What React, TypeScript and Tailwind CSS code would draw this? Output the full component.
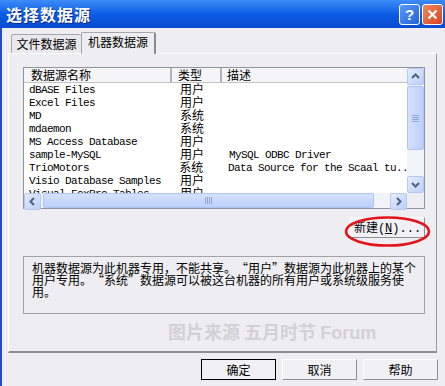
import type { ReactNode } from 'react';

const cjk = '[font-family:"Noto_Sans_CJK_SC",sans-serif]';
const mono = '[font-family:"Liberation_Mono","Noto_Sans_CJK_SC",monospace]';

type Row = { name: string; type: string; desc?: string };

const rows: Row[] = [
    { name: 'dBASE Files', type: '用户' },
    { name: 'Excel Files', type: '用户' },
    { name: 'MD', type: '系统' },
    { name: 'mdaemon', type: '系统' },
    { name: 'MS Access Database', type: '用户' },
    { name: 'sample-MySQL', type: '用户', desc: 'MySQL ODBC Driver' },
    { name: 'TrioMotors', type: '系统', desc: 'Data Source for the Scaal tu..' },
    { name: 'Visio Database Samples', type: '用户' },
    { name: 'Visual FoxPro Tables', type: '用户' },
];

function Arrow({ dir }: { dir: 'up' | 'down' | 'left' | 'right' }) {
    const d = {
        up: 'M2 7 L5.5 3.5 L9 7',
        down: 'M2 4 L5.5 7.5 L9 4',
        left: 'M7 2 L3.5 5.5 L7 9',
        right: 'M4 2 L7.5 5.5 L4 9',
    }[dir];
    return (
        <svg width="11" height="11" viewBox="0 0 11 11">
            <path d={d} fill="none" stroke="#4d6185" strokeWidth="2" />
        </svg>
    );
}

function ScrollBtn({ dir }: { dir: 'up' | 'down' | 'left' | 'right' }) {
    return (
        <div className="flex h-[17px] w-[17px] shrink-0 items-center justify-center rounded-[2px] border border-[#b4c8f6] bg-gradient-to-br from-[#e4ecfd] to-[#bdd0f8]">
            <Arrow dir={dir} />
        </div>
    );
}

function Grip({ vertical }: { vertical?: boolean }) {
    return (
        <div className={vertical ? 'flex flex-col gap-[1px]' : 'flex gap-[1px]'}>
            {[0, 1, 2, 3].map((i) => (
                <div
                    key={i}
                    className={
                        vertical
                            ? 'h-[1px] w-[7px] bg-[#8da6dc]'
                            : 'h-[7px] w-[1px] bg-[#8da6dc]'
                    }
                />
            ))}
        </div>
    );
}

// full-width curly quotes, as the system font draws them
function Q({ open, children }: { open?: boolean; children: ReactNode }) {
    return (
        <span className={`inline-block w-[12px] ${open ? 'text-right' : 'text-left'}`}>
            {children}
        </span>
    );
}

function Button({ children, primary }: { children: ReactNode; primary?: boolean }) {
    return (
        <div
            className={`flex h-[21px] w-[75px] items-center justify-center text-[12px] text-black ${cjk} ${
                primary
                    ? 'border border-black'
                    : 'border-t border-l border-[#ffffff] border-r-[#8f8f93] border-b-[#8f8f93] border-r border-b'
            } bg-[#f1f0f4]`}
        >
            {children}
        </div>
    );
}

export default function App() {
    return (
        <div lang="zh-CN" className="flex h-[386px] w-[445px] flex-col overflow-hidden bg-[#eeedf1]">
            {/* title bar */}
            <div className="flex h-[28px] shrink-0 items-center justify-between bg-gradient-to-b from-[#3d8cf6] via-[#0c5ce6] to-[#0a4bd0] pl-[6px] pr-[2px]">
                <span className={`text-[16px] font-bold tracking-[1px] text-white [text-shadow:1px_1px_0_#0a2a8a] ${cjk}`}>
                    选择数据源
                </span>
                <div className="flex gap-[2px]">
                    <div className="flex h-[21px] w-[21px] items-center justify-center rounded-[3px] border border-white bg-gradient-to-br from-[#5b9af8] to-[#2460d8] text-[15px] font-bold leading-none text-white [font-family:'Liberation_Sans',sans-serif]">
                        ?
                    </div>
                    <div className="flex h-[21px] w-[21px] items-center justify-center rounded-[3px] border border-white bg-gradient-to-br from-[#f08a5c] to-[#d5401a]">
                        <svg width="11" height="11" viewBox="0 0 11 11">
                            <path d="M1.5 1.5 L9.5 9.5 M9.5 1.5 L1.5 9.5" stroke="white" strokeWidth="2.2" />
                        </svg>
                    </div>
                </div>
            </div>

            {/* body */}
            <div className="flex flex-1 flex-col border-l-2 border-[#1c4fd2] pl-[6px] pr-[8px]">
                {/* tabs */}
                <div className={`mt-[4px] flex h-[21px] items-end pl-[3px] text-[12px] ${cjk}`}>
                    <div className="flex h-[19px] w-[70px] items-center justify-center rounded-t-[2px] border-t border-l border-[#a7a7ab] bg-[#e9e8ec] pb-[1px]">
                        文件数据源
                    </div>
                    <div className="relative z-10 -mb-px flex h-[22px] w-[75px] items-center justify-center rounded-t-[2px] border-t border-l border-r-2 border-[#a7a7ab] border-r-[#8c8c90] bg-[#eeedf1] pb-[3px]">
                        机器数据源
                    </div>
                </div>

                {/* panel */}
                <div className="flex h-[300px] flex-col border-t border-l border-[#ffffff] border-r border-b-2 border-r-[#9b9b9f] border-b-[#8e8e92] bg-[#eeedf1] pl-[14px]">
                    {/* list view */}
                    <div className="mt-[13px] flex h-[142px] w-[402px] flex-col border border-[#8e959f] bg-white">
                        <div className="flex h-[125px]">
                            <div className="flex-1 overflow-hidden">
                                <div className={`flex h-[15px] shrink-0 items-center border-b border-[#c4c4c8] bg-[#f5f5f7] text-[12px] leading-[12px] ${cjk}`}>
                                    <div className="h-full w-[148px] border-r-2 border-[#b3b3b8] pl-[7px] pt-[1px]">数据源名称</div>
                                    <div className="h-full w-[50px] border-r-2 border-[#b3b3b8] pl-[6px] pt-[1px]">类型</div>
                                    <div className="h-full flex-1 pl-[5px] pt-[1px]">描述</div>
                                </div>
                                {rows.map((r) => (
                                    <div key={r.name} className="flex h-[13px] items-center whitespace-nowrap text-black">
                                        <div className={`w-[150px] translate-y-[1px] pl-[5px] text-[11px] leading-[13px] tracking-[-0.6px] ${mono}`}>{r.name}</div>
                                        <div className={`w-[54px] -translate-y-[1px] pl-[6px] text-[12px] leading-[13px] ${cjk}`}>{r.type}</div>
                                        <div className={`translate-y-[1px] overflow-hidden pl-[1px] text-[11px] leading-[13px] tracking-[-0.6px] ${mono}`}>{r.desc}</div>
                                    </div>
                                ))}
                            </div>
                            {/* vertical scrollbar */}
                            <div className="flex w-[17px] flex-col bg-[#f1f3fb]">
                                <ScrollBtn dir="up" />
                                <div className="mt-[1px] flex h-[64px] items-center justify-center rounded-[2px] border border-[#b0c5f4] bg-gradient-to-r from-[#d5e1fd] to-[#bcd0fb]">
                                    <Grip vertical />
                                </div>
                                <div className="flex-1" />
                                <ScrollBtn dir="down" />
                            </div>
                        </div>
                        {/* horizontal scrollbar */}
                        <div className="flex h-[15px] bg-[#f1f3fb]">
                            <div className="flex w-[383px]">
                                <ScrollBtn dir="left" />
                                <div className="ml-[2px] flex h-[15px] w-[331px] items-center justify-center rounded-[2px] border border-[#b0c5f4] bg-gradient-to-b from-[#d5e1fd] to-[#bcd0fb]">
                                    <Grip />
                                </div>
                                <div className="flex-1" />
                                <ScrollBtn dir="right" />
                            </div>
                            <div className="flex-1 bg-[#eeedf1]" />
                        </div>
                    </div>

                    {/* new button */}
                    <div className="mt-[8px] flex w-[402px] justify-end">
                        <div className="relative">
                            <Button>
                                <span>
                                    新建<span className={mono}>(<u>N</u>)...</span>
                                </span>
                            </Button>
                            <svg className="absolute left-[-8px] top-[-4px]" width="92" height="36" viewBox="0 0 92 36">
                                <ellipse cx="45.5" cy="18.5" rx="41.5" ry="14" fill="none" stroke="#e3131b" strokeWidth="2.6" />
                            </svg>
                        </div>
                    </div>

                    {/* info box */}
                    <div className={`mt-[18px] h-[58px] w-[402px] whitespace-nowrap border border-[#a2a2a6] pl-[8px] pt-[5px] text-[12px] leading-[12px] ${cjk}`}>
                        机器数据源为此机器专用，不能共享。<Q open>“</Q>用户<Q>”</Q>数据源为此机器上的某个
                        <br />
                        用户专用。<Q open>“</Q>系统<Q>”</Q>数据源可以被这台机器的所有用户或系统级服务使
                        <br />
                        用。
                    </div>

                    {/* watermark */}
                    <div className={`ml-[145px] mt-[8px] text-[18px] font-bold leading-[18px] text-[#d2d1d6] ${cjk}`}>
                        图片来源 五月时节 <span className="[font-family:'Liberation_Sans',sans-serif]">Forum</span>
                    </div>
                </div>

                {/* dialog buttons */}
                <div className="-mr-[1px] mt-[6px] flex justify-end gap-[6px]">
                    <Button primary>确定</Button>
                    <Button>取消</Button>
                    <Button>帮助</Button>
                </div>
            </div>
        </div>
    );
}
